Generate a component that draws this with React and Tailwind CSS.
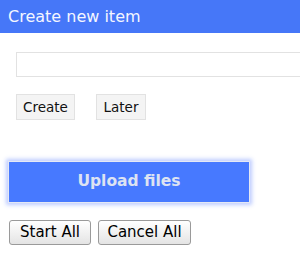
import React from "react";

const App = () => {
  return (
    <div className="w-[300px] h-[274px] bg-white overflow-hidden font-['DejaVu_Sans',sans-serif]">
      <div className="h-[33px] bg-[#4677f8] px-[8px] flex items-center text-[16px] text-[#f4f6ff]">
        Create new item
      </div>

      <div className="pl-[16px] pt-[19px]">
        <input
          type="text"
          className="block w-[300px] h-[25px] border border-[#e2e2e2] bg-white outline-none"
        />
        <div className="flex gap-[21px] mt-[17px]">
          <button className="h-[26px] w-[59px] bg-[#f4f4f4] border border-[#e2e2e2] text-[13.5px] text-[#111]">
            Create
          </button>
          <button className="h-[26px] w-[50px] bg-[#f4f4f4] border border-[#e2e2e2] text-[13.5px] text-[#111]">
            Later
          </button>
        </div>
      </div>

      <div className="pl-[8px] pt-[41px]">
        <button className="w-[242px] h-[42px] bg-[#4779ff] border border-[#e4e8f4] shadow-[0_0_4px_2px_rgba(70,110,255,0.35)] text-[15.5px] font-bold text-[#dde3f2]">
          Upload files
        </button>
        <div className="flex gap-[7px] mt-[17px] pl-[1px]">
          <button className="h-[25px] w-[82px] rounded-[3px] border border-[#9a9a9a] bg-gradient-to-b from-white to-[#e4e4e4] text-[15px] text-black">
            Start All
          </button>
          <button className="h-[25px] w-[93px] rounded-[3px] border border-[#9a9a9a] bg-gradient-to-b from-white to-[#e4e4e4] text-[15px] text-black">
            Cancel All
          </button>
        </div>
      </div>
    </div>
  );
};

export default App;
